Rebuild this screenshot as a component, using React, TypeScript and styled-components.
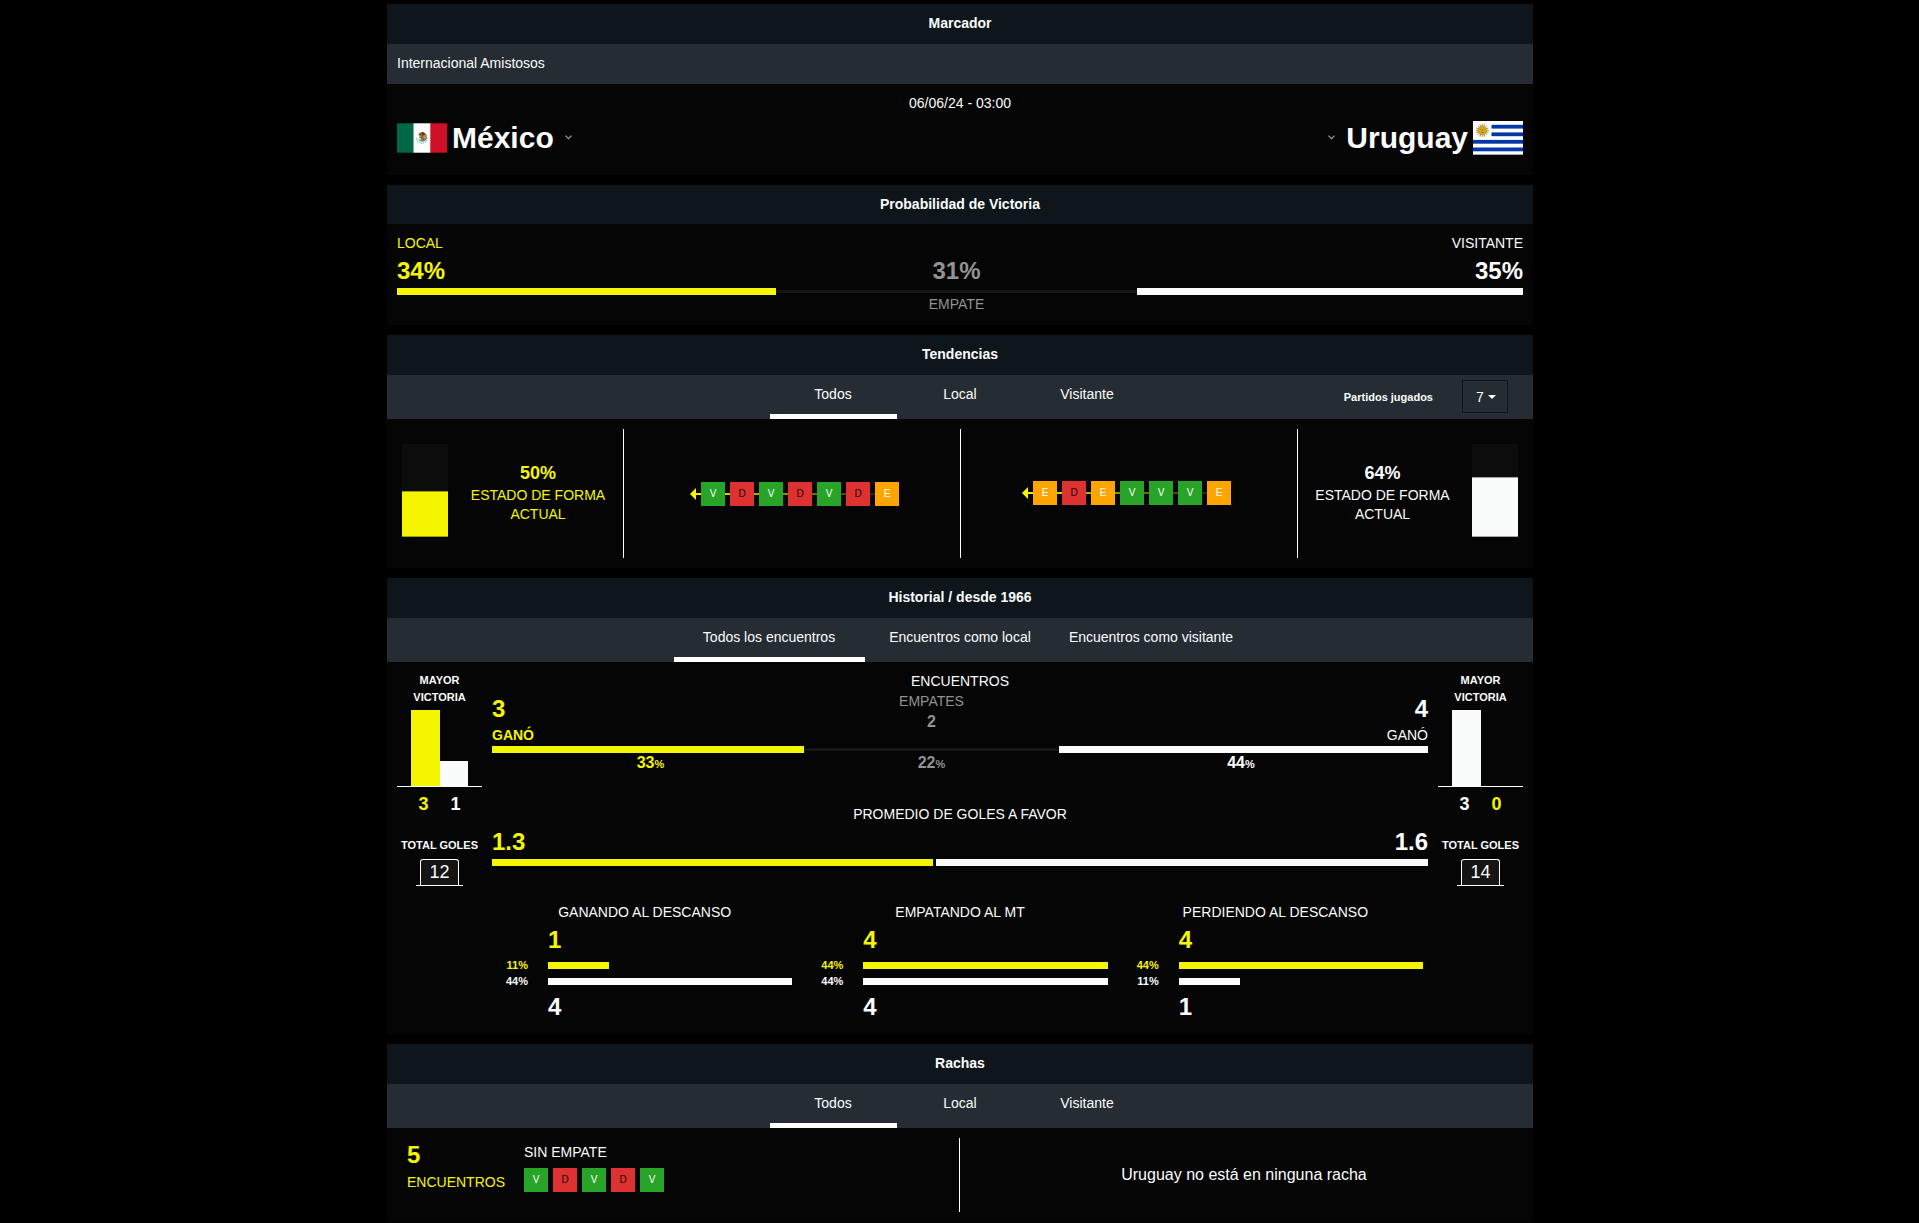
import React, { useState } from "react";
import styled, { createGlobalStyle, css } from "styled-components";

const color = {
  page: "#000000",
  panel: "#050505",
  header: "#0e151b",
  bar: "#262c33",
  track: "#151515",
  home: "#f5f500",
  away: "#fafcfb",
  muted: "#929292",
};

type Side = "home" | "away" | "muted";
type Result = "V" | "D" | "E";

const GlobalStyle = createGlobalStyle`
  *, *::before, *::after { box-sizing: border-box; }
  body {
    margin: 0;
    background: ${color.page};
    color: ${color.away};
    font: 14px/18px Arial, "Liberation Sans", sans-serif;
  }
  h2, h3, p, ul { margin: 0; padding: 0; font: inherit; }
  button, select { font: inherit; color: inherit; background: none; border: 0; padding: 0; cursor: pointer; }
`;

const Page = styled.main`
  display: flex;
  flex-direction: column;
  gap: 10px;
  width: 100%;
  max-width: 1147px;
  margin: 0 auto;
  padding: 4px 0 0 1px;
`;

const Panel = styled.section`
  background: ${color.panel};
`;

const PanelTitle = styled.h2`
  background: ${color.header};
  line-height: 39px;
  font-weight: bold;
  text-align: center;
`;

const SubBar = styled.div`
  height: 41px;
  padding: 0 10px;
  border-top: 1px solid ${color.header};
  background: ${color.bar};
  line-height: 39px;
`;

const TabBar = styled.div`
  display: grid;
  grid-template-columns: 1fr auto 1fr;
  border-top: 1px solid ${color.header};
  background: ${color.bar};
`;

const TabList = styled.div<{ $tabWidth: number }>`
  grid-column: 2;
  display: grid;
  grid-template-columns: repeat(3, ${(p) => p.$tabWidth}px);
`;

const Tab = styled.button<{ $active: boolean }>`
  height: 44px;
  line-height: 39px;
  border-bottom: 5px solid ${(p) => (p.$active ? "#ffffff" : "transparent")};
`;

const PlayedFilter = styled.div`
  display: flex;
  align-items: center;
  justify-content: flex-end;
  gap: 29px;
  padding: 0 25px 1px 0;
`;

const FilterLabel = styled.label`
  font-size: 11px;
  font-weight: bold;
`;

const SelectBox = styled.span`
  position: relative;
  display: block;
  svg {
    position: absolute;
    right: 12px;
    top: 15px;
    pointer-events: none;
  }
`;

const Select = styled.select`
  appearance: none;
  display: block;
  width: 46px;
  height: 33px;
  padding: 0 13px;
  border: 1px solid ${color.header};
  background: ${color.bar};
`;

/* Scoreboard */

const Kickoff = styled.p`
  padding-top: 10px;
  text-align: center;
`;

const Teams = styled.div`
  display: flex;
  justify-content: space-between;
  align-items: center;
  height: 51px;
  margin: 0 10px 12px;
`;

const TeamButton = styled.button<{ $away?: boolean }>`
  display: flex;
  flex-direction: ${(p) => (p.$away ? "row-reverse" : "row")};
  align-items: center;
  gap: 5px;
`;

const TeamName = styled.span`
  font-size: 30px;
  line-height: 34px;
  font-weight: bold;
`;

const Chevron = styled.svg`
  margin: 0 6px;
`;

/* Shared figures */

const Figure = styled.strong<{ $side: Side }>`
  display: block;
  color: ${(p) => color[p.$side]};
  font-size: 24px;
  line-height: 28px;
`;

const Caption = styled.span<{ $side: Side; $strong?: boolean }>`
  display: block;
  color: ${(p) => color[p.$side]};
  font-weight: ${(p) => (p.$strong ? "bold" : "normal")};
`;

const Split = styled.div<{ $parts: number[]; $gap?: number }>`
  display: grid;
  grid-template-columns: ${(p) => p.$parts.map((n) => `minmax(0, ${n}fr)`).join(" ")};
  column-gap: ${(p) => p.$gap ?? 0}px;
`;

const Segment = styled.div<{ $side: Side }>`
  height: 7px;
  background: ${(p) =>
    p.$side === "muted"
      ? `linear-gradient(${color.track}, ${color.track}) center / 100% 3px no-repeat`
      : color[p.$side]};
`;

const Odds = styled.div`
  padding: 10px 10px 11px;
`;

const OddsCell = styled.div<{ $align: "left" | "center" | "right" }>`
  display: flex;
  flex-direction: column;
  justify-content: flex-end;
  gap: 5px;
  height: 54px;
  padding-bottom: 3px;
  text-align: ${(p) => p.$align};
`;

const OddsFoot = styled.div`
  height: 19px;
  text-align: center;
`;

/* Trends */

const Trends = styled.div`
  display: grid;
  grid-template-columns: 227fr 337fr 337fr 225fr;
  height: 149px;
  padding: 10px;
`;

const TrendCell = styled.div<{ $divided?: boolean }>`
  display: flex;
  align-items: center;
  justify-content: center;
  ${(p) => p.$divided && css`border-right: 1px solid #ffffff;`}
`;

const Gauge = styled.div`
  display: flex;
  align-items: flex-end;
  align-self: flex-start;
  width: 46px;
  height: 93px;
  margin: 15px 5px 0;
  background: #0c0c0c;
`;

const GaugeFill = styled.div<{ $side: Side }>`
  width: 100%;
  background: ${(p) => color[p.$side]};
  border: solid rgba(0, 0, 0, 0.35);
  border-width: 1px 0;
`;

const FormText = styled.p<{ $side: Side }>`
  flex: 1;
  align-self: flex-start;
  margin-top: 34px;
  padding: 0 15px;
  color: ${(p) => color[p.$side]};
  line-height: 19px;
  text-align: center;
  strong {
    display: block;
    margin-bottom: 3px;
    font-size: 18px;
    line-height: 20px;
  }
`;

const Timeline = styled.div<{ $away?: boolean }>`
  display: flex;
  align-items: center;
  margin: ${(p) => (p.$away ? "0 5px 2px 0" : "0 0 0 5px")};
  background: linear-gradient(to right, ${color.home}, transparent) 6px center / 100% 2px no-repeat;
  svg { margin-right: 5px; }
`;

const Chips = styled.ul`
  display: flex;
  gap: 5px;
  list-style: none;
`;

const chipColor: Record<Result, string> = { V: "#28a428", D: "#de3131", E: "#ffa500" };

const Chip = styled.li<{ $result: Result }>`
  width: 24px;
  height: 24px;
  background: ${(p) => chipColor[p.$result]};
  color: ${(p) => (p.$result === "D" ? "#1c0606" : "#ffffff")};
  font-size: 10px;
  line-height: 23px;
  text-align: center;
`;

/* Head to head */

const History = styled.div`
  display: grid;
  grid-template-columns: 85px minmax(0, 1fr) 85px;
  column-gap: 10px;
  padding: 10px 10px 13px;
`;

const SideColumn = styled.div`
  text-align: center;
`;

const SmallTitle = styled.h3`
  font-size: 11px;
  font-weight: bold;
  line-height: 17px;
  white-space: nowrap;
`;

const WinChart = styled.div`
  display: flex;
  align-items: flex-end;
  justify-content: center;
  height: 77px;
  margin-top: 4px;
  border-bottom: 1px solid #ffffff;
`;

const WinBar = styled.div<{ $side: Side }>`
  width: 33.33%;
  background: ${(p) => color[p.$side]};
`;

const WinScore = styled.div`
  display: flex;
  justify-content: center;
  margin: 5px 0 21px;
  font-size: 18px;
  line-height: 24px;
  font-weight: bold;
`;

const WinNumber = styled.span<{ $side: Side }>`
  width: 32px;
  color: ${(p) => color[p.$side]};
`;

const GoalGround = styled.div`
  width: 47px;
  margin: 5px auto 0;
  padding: 0 4px;
  border-bottom: 1px solid #ffffff;
`;

const GoalFrame = styled.div`
  height: 26px;
  border: solid #ffffff;
  border-width: 1px 1px 0;
  border-radius: 3px 3px 0 0;
  background: ${color.track};
  font-size: 18px;
  line-height: 25px;
`;

const CenterTitle = styled.h3`
  text-align: center;
`;

const MeetCell = styled.div<{ $align: "left" | "right" }>`
  display: flex;
  flex-direction: column;
  justify-content: flex-end;
  gap: 3px;
  height: 56px;
  padding-bottom: 2px;
  text-align: ${(p) => p.$align};
`;

const DrawCell = styled.div`
  display: grid;
  align-content: start;
  gap: 2px;
  padding-top: 2px;
  text-align: center;
`;

const MidFigure = styled.strong<{ $side: Side }>`
  display: block;
  color: ${(p) => color[p.$side]};
  font-size: 16px;
  line-height: 20px;
  text-align: center;
  small {
    font-size: 11px;
    line-height: 11px;
  }
`;

const Shares = styled(Split)`
  ${MidFigure}:first-child { padding-left: 5px; }
  ${MidFigure}:last-child { padding-right: 5px; }
`;

const Averages = styled.div`
  margin-top: 32px;
`;

const AverageFigures = styled.div`
  display: flex;
  justify-content: space-between;
  margin: 5px 0 3px;
`;

const HalfTimes = styled.div`
  display: grid;
  grid-template-columns: repeat(3, minmax(0, 1fr));
  margin: 37px -5px 0;
`;

const HalfTime = styled.div`
  display: grid;
  grid-template-columns: 41px minmax(0, 1fr);
  column-gap: 20px;
  padding-right: 10px;
`;

const HalfTitle = styled(CenterTitle)`
  grid-column: 1 / -1;
  margin: 0 -10px 5px 0;
`;

const HalfFigure = styled(Figure)`
  grid-column: 2;
`;

const HalfPercent = styled.span<{ $side: Side }>`
  color: ${(p) => color[p.$side]};
  font-size: 11px;
  font-weight: bold;
  line-height: 7px;
  text-align: right;
`;

const HalfRows = styled.div`
  grid-column: 1 / -1;
  display: grid;
  grid-template-columns: subgrid;
  row-gap: 9px;
  margin: 8px 0;
`;

/* Streaks */

const Streaks = styled.div`
  display: grid;
  grid-template-columns: 1fr 1fr;
  height: 94px;
  padding: 10px;
`;

const StreakHome = styled.div`
  display: flex;
  gap: 19px;
  padding: 3px 10px;
  border-right: 1px solid #ffffff;
`;

const StreakCount = styled.div`
  display: grid;
  align-content: start;
  gap: 4px;
`;

const StreakDetail = styled.div`
  display: grid;
  align-content: start;
  gap: 7px;
  padding-top: 2px;
`;

const NoStreak = styled.p`
  align-self: center;
  padding-left: 5px;
  font-size: 16px;
  line-height: 20px;
  text-align: center;
`;

function MexicoFlag() {
  return (
    <svg width="50" height="30" viewBox="0 0 50 30" role="img" aria-label="Bandera de México">
      <rect width="50" height="30" fill="#fff" />
      <rect width="16.5" height="30" fill="#006847" />
      <rect x="33.3" width="16.7" height="30" fill="#ce1126" />
      <path d="M19.500 15c.3 3.600 3 5.300 5.500 5.300s5-1.700 5.500-5.300" fill="none" stroke="#a9bfb0" strokeWidth="1.200" strokeDasharray="1.500 .7" />
      <path d="M21.300 11.500c1-2 3.500-2.800 5.500-2 2.600 1 3.600 3.400 2.900 5.700-.6 1.900-2 3-3.700 3.300l-2.400-1 .7-2-2.600-.6 1.400-1.700z" fill="#8a6238" />
      <path d="M24 9.800l2.800-.6 1.500 2-2.500 1.300z" fill="#5c3b22" />
      <path d="M26 13l3-1.500.4 3-2.200 2z" fill="#b99467" />
      <path d="M21.500 16.500c1.500-.7 3 .8 4.800.2l-.5 2.200c-1.700.4-3.400-.8-4.300-2.400z" fill="#4fb0bd" />
      <path d="M22.500 12.500l1.500 1.500-1.500 1z" fill="#d8b04a" />
      <path d="M0 .3h50M0 29.700h50" stroke="#000" strokeOpacity=".45" strokeWidth=".8" />
    </svg>
  );
}

function UruguayFlag() {
  const rays = Array.from({ length: 16 }, (_, i) => i * 22.5);
  return (
    <svg width="50" height="34" viewBox="0 0 50 34" role="img" aria-label="Bandera de Uruguay">
      <rect width="50" height="34" fill="#fff" />
      <g fill="#0038a8">
        <rect x="18.500" y="3.800" width="31.500" height="3.800" />
        <rect x="18.500" y="11.400" width="31.500" height="3.800" />
        <rect y="18.900" width="50" height="3.800" />
        <rect y="26.500" width="50" height="3.800" />
      </g>
      <g stroke="#a8832a" strokeWidth=".9">
        {rays.map((a) => (
          <path key={a} d="M9.300 5.600V2.800" transform={`rotate(${a} 9.300 9.400)`} />
        ))}
      </g>
      <circle cx="9.300" cy="9.400" r="4.200" fill="#d6ab16" stroke="#9a7815" strokeWidth=".5" />
      <path d="M7.600 8.500h1M10 8.500h1M9.300 8.800v1.300M8 11.200q1.300.8 2.600 0" stroke="#7b5c09" strokeWidth=".6" fill="none" />
      <path d="M0 33.700h50" stroke="#777" strokeWidth=".8" />
    </svg>
  );
}

function ChevronDown() {
  return (
    <Chevron width="7" height="5" viewBox="0 0 7 5" aria-hidden="true">
      <path d="M.5.7l3 3 3-3" fill="none" stroke="#a0a0a0" strokeWidth="1.200" />
    </Chevron>
  );
}

function ResultChips({ results }: { results: Result[] }) {
  return (
    <Chips>
      {results.map((r, i) => (
        <Chip key={i} $result={r}>{r}</Chip>
      ))}
    </Chips>
  );
}

function ResultTimeline({ results, away }: { results: Result[]; away?: boolean }) {
  return (
    <Timeline $away={away}>
      <svg width="6" height="12" viewBox="0 0 6 12" aria-hidden="true">
        <path d="M6 0v12L0 6z" fill="#f5f500" />
      </svg>
      <ResultChips results={results} />
    </Timeline>
  );
}

function Tabs({ labels, width, children }: { labels: string[]; width: number; children?: React.ReactNode }) {
  const [active, setActive] = useState(0);
  return (
    <TabBar>
      <TabList role="tablist" $tabWidth={width}>
        {labels.map((label, i) => (
          <Tab key={label} role="tab" aria-selected={i === active} $active={i === active} onClick={() => setActive(i)}>
            {label}
          </Tab>
        ))}
      </TabList>
      {children}
    </TabBar>
  );
}

interface TeamGoalsProps {
  bars: { side: Side; goals: number }[];
  total: number;
}

function TeamGoals({ bars, total }: TeamGoalsProps) {
  const best = Math.max(...bars.map((b) => b.goals));
  return (
    <SideColumn>
      <SmallTitle>MAYOR<br />VICTORIA</SmallTitle>
      <WinChart>
        {bars.map((b) => (
          <WinBar key={b.side} $side={b.side} style={{ height: `${(b.goals / best) * 100}%` }} />
        ))}
      </WinChart>
      <WinScore>
        {bars.map((b) => (
          <WinNumber key={b.side} $side={b.side}>{b.goals}</WinNumber>
        ))}
      </WinScore>
      <SmallTitle>TOTAL GOLES</SmallTitle>
      <GoalGround>
        <GoalFrame>{total}</GoalFrame>
      </GoalGround>
    </SideColumn>
  );
}

const halfTimes = [
  { title: "GANANDO AL DESCANSO", home: 1, away: 4 },
  { title: "EMPATANDO AL MT", home: 4, away: 4 },
  { title: "PERDIENDO AL DESCANSO", home: 4, away: 1 },
];

const venueTabs = ["Todos", "Local", "Visitante"];
const oddsParts = [379, 361, 386];
const meetingParts = [312, 255, 369];

export default function App() {
  const [played, setPlayed] = useState("7");
  return (
    <>
      <GlobalStyle />
      <Page>
        <Panel>
          <PanelTitle>Marcador</PanelTitle>
          <SubBar>Internacional Amistosos</SubBar>
          <Kickoff>06/06/24 - 03:00</Kickoff>
          <Teams>
            <TeamButton>
              <MexicoFlag />
              <TeamName>México</TeamName>
              <ChevronDown />
            </TeamButton>
            <TeamButton $away>
              <UruguayFlag />
              <TeamName>Uruguay</TeamName>
              <ChevronDown />
            </TeamButton>
          </Teams>
        </Panel>

        <Panel>
          <PanelTitle>Probabilidad de Victoria</PanelTitle>
          <Odds>
            <Split $parts={oddsParts}>
              <OddsCell $align="left">
                <Caption $side="home">LOCAL</Caption>
                <Figure $side="home">34%</Figure>
              </OddsCell>
              <OddsCell $align="center">
                <Figure $side="muted">31%</Figure>
              </OddsCell>
              <OddsCell $align="right">
                <Caption $side="away">VISITANTE</Caption>
                <Figure $side="away">35%</Figure>
              </OddsCell>
              <Segment $side="home" />
              <Segment $side="muted" />
              <Segment $side="away" />
              <span />
              <OddsFoot>
                <Caption $side="muted">EMPATE</Caption>
              </OddsFoot>
            </Split>
          </Odds>
        </Panel>

        <Panel>
          <PanelTitle>Tendencias</PanelTitle>
          <Tabs labels={venueTabs} width={127}>
            <PlayedFilter>
              <FilterLabel htmlFor="played">Partidos jugados</FilterLabel>
              <SelectBox>
                <Select id="played" value={played} onChange={(e) => setPlayed(e.target.value)}>
                  {["3", "5", "7"].map((n) => (
                    <option key={n}>{n}</option>
                  ))}
                </Select>
                <svg width="8" height="4" viewBox="0 0 8 4" aria-hidden="true">
                  <path d="M0 0h8L4 4z" fill="#fafcfb" />
                </svg>
              </SelectBox>
            </PlayedFilter>
          </Tabs>
          <Trends>
            <TrendCell $divided>
              <Gauge>
                <GaugeFill $side="home" style={{ height: "50%" }} />
              </Gauge>
              <FormText $side="home">
                <strong>50%</strong>ESTADO DE FORMA ACTUAL
              </FormText>
            </TrendCell>
            <TrendCell $divided>
              <ResultTimeline results={["V", "D", "V", "D", "V", "D", "E"]} />
            </TrendCell>
            <TrendCell $divided>
              <ResultTimeline away results={["E", "D", "E", "V", "V", "V", "E"]} />
            </TrendCell>
            <TrendCell>
              <FormText $side="away">
                <strong>64%</strong>ESTADO DE FORMA ACTUAL
              </FormText>
              <Gauge>
                <GaugeFill $side="away" style={{ height: "64%" }} />
              </Gauge>
            </TrendCell>
          </Trends>
        </Panel>

        <Panel>
          <PanelTitle>Historial / desde 1966</PanelTitle>
          <Tabs
            labels={["Todos los encuentros", "Encuentros como local", "Encuentros como visitante"]}
            width={191}
          />
          <History>
            <TeamGoals bars={[{ side: "home", goals: 3 }, { side: "away", goals: 1 }]} total={12} />
            <div>
              <CenterTitle>ENCUENTROS</CenterTitle>
              <Split $parts={meetingParts}>
                <MeetCell $align="left">
                  <Figure $side="home">3</Figure>
                  <Caption $side="home" $strong>GANÓ</Caption>
                </MeetCell>
                <DrawCell>
                  <Caption $side="muted">EMPATES</Caption>
                  <MidFigure $side="muted">2</MidFigure>
                </DrawCell>
                <MeetCell $align="right">
                  <Figure $side="away">4</Figure>
                  <Caption $side="away">GANÓ</Caption>
                </MeetCell>
                <Segment $side="home" />
                <Segment $side="muted" />
                <Segment $side="away" />
              </Split>
              <Shares $parts={meetingParts}>
                <MidFigure $side="home">33<small>%</small></MidFigure>
                <MidFigure $side="muted">22<small>%</small></MidFigure>
                <MidFigure $side="away">44<small>%</small></MidFigure>
              </Shares>
              <Averages>
                <CenterTitle>PROMEDIO DE GOLES A FAVOR</CenterTitle>
                <AverageFigures>
                  <Figure $side="home">1.3</Figure>
                  <Figure $side="away">1.6</Figure>
                </AverageFigures>
                <Split $parts={[441, 492]} $gap={3}>
                  <Segment $side="home" />
                  <Segment $side="away" />
                </Split>
              </Averages>
              <HalfTimes>
                {halfTimes.map((h) => (
                  <HalfTime key={h.title}>
                    <HalfTitle>{h.title}</HalfTitle>
                    <HalfFigure $side="home">{h.home}</HalfFigure>
                    <HalfRows>
                      <HalfPercent $side="home">{h.home * 11}%</HalfPercent>
                      <Segment $side="home" style={{ width: `${(h.home / 4) * 100}%` }} />
                      <HalfPercent $side="away">{h.away * 11}%</HalfPercent>
                      <Segment $side="away" style={{ width: `${(h.away / 4) * 100}%` }} />
                    </HalfRows>
                    <HalfFigure $side="away">{h.away}</HalfFigure>
                  </HalfTime>
                ))}
              </HalfTimes>
            </div>
            <TeamGoals bars={[{ side: "away", goals: 3 }, { side: "home", goals: 0 }]} total={14} />
          </History>
        </Panel>

        <Panel>
          <PanelTitle>Rachas</PanelTitle>
          <Tabs labels={venueTabs} width={127} />
          <Streaks>
            <StreakHome>
              <StreakCount>
                <Figure $side="home">5</Figure>
                <Caption $side="home">ENCUENTROS</Caption>
              </StreakCount>
              <StreakDetail>
                <Caption $side="away">SIN EMPATE</Caption>
                <ResultChips results={["V", "D", "V", "D", "V"]} />
              </StreakDetail>
            </StreakHome>
            <NoStreak>Uruguay no está en ninguna racha</NoStreak>
          </Streaks>
        </Panel>
      </Page>
    </>
  );
}
